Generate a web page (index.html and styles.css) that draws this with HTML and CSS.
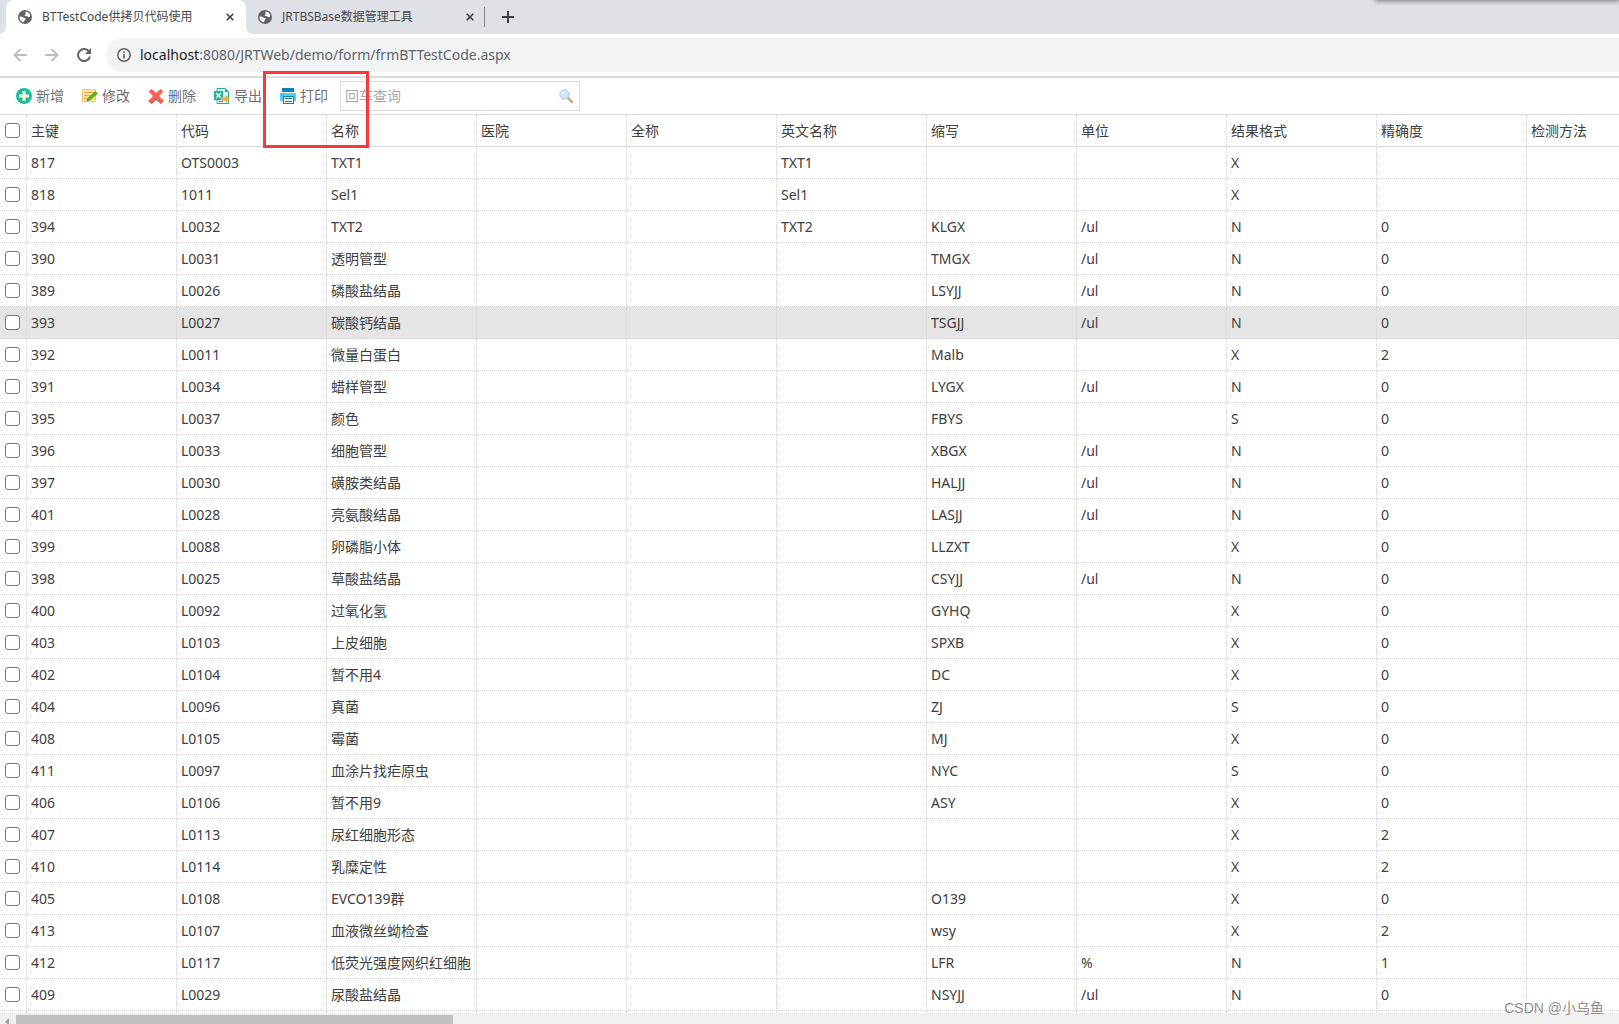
FILE: index.html
```html
<!DOCTYPE html>
<html lang="zh-CN">
<head>
<meta charset="utf-8">
<title>BTTestCode供拷贝代码使用</title>
<link rel="stylesheet" href="styles.css">
</head>
<body>
<svg class="defs" aria-hidden="true">
  <symbol id="globe" viewBox="0 0 14 14"><circle cx="7" cy="7" r="7" fill="#5f6368"/><path d="M7.5 1.6a5.4 5.4 0 0 1 4.8 4.6c-.6 1-1.6 1.2-2.400.9-.4-1-1.500-1-2.600-1.100-.9-.6-.6-1.600.3-1.700C8.200 3.500 7 3 7.500 1.600zM1.600 6.500c1.400-.2 2.700.1 3.600.9.8.6 2.200.3 2.500 1.300.1 1-1.200 1-1.300 2.100l-.6 1.500A5.400 5.400 0 0 1 1.600 6.500z" fill="#fff"/></symbol>
  <symbol id="close" viewBox="0 0 8 8"><path d="M.7.7l6.600 6.600M7.300.7L.7 7.300" stroke="#3c4043" stroke-width="1.600"/></symbol>
</svg>

<header class="browser">
  <nav class="tabs" aria-label="标签页">
    <div class="tab tab-active">
      <svg class="favicon"><use href="#globe"/></svg>
      <span class="tab-title">BTTestCode供拷贝代码使用</span>
      <button class="tab-close" aria-label="关闭"><svg><use href="#close"/></svg></button>
    </div>
    <div class="tab">
      <svg class="favicon"><use href="#globe"/></svg>
      <span class="tab-title">JRTBSBase数据管理工具</span>
      <button class="tab-close" aria-label="关闭"><svg><use href="#close"/></svg></button>
    </div>
    <button class="tab-new" aria-label="新标签页"><svg viewBox="0 0 12 12"><path d="M6 0v12M0 6h12" stroke="#3c4043" stroke-width="2"/></svg></button>
  </nav>
  <div class="address-row">
    <button class="nav-btn" aria-label="后退"><svg viewBox="0 0 14 14"><path d="M14 7H1.500M7.500 1L1.500 7l6 6" fill="none" stroke="#babcbe" stroke-width="1.800"/></svg></button>
    <button class="nav-btn" aria-label="前进"><svg viewBox="0 0 14 14"><path d="M0 7h12.500M6.500 1l6 6-6 6" fill="none" stroke="#babcbe" stroke-width="1.800"/></svg></button>
    <button class="nav-btn" aria-label="刷新"><svg viewBox="0 0 14 14"><path d="M12 3.600A6 6 0 1 0 12.900 8.500" fill="none" stroke="#5f6368" stroke-width="2"/><path d="M14 0v6H8z" fill="#5f6368"/></svg></button>
    <div class="address">
      <svg class="info" viewBox="0 0 14 14"><circle cx="7" cy="7" r="6.200" fill="none" stroke="#5f6368" stroke-width="1.500"/><path d="M7 6v4.500M7 3.500V5" stroke="#5f6368" stroke-width="1.600"/></svg>
      <span class="url"><b>localhost</b>:8080/JRTWeb/demo/form/frmBTTestCode.aspx</span>
    </div>
  </div>
</header>

<main class="page">
  <div class="toolbar">
    <button class="tool"><svg viewBox="0 0 16 16"><circle cx="8" cy="8" r="8" fill="#1abc9c"/><path d="M8 3v10M3 8h10" stroke="#fff6d8" stroke-width="3"/></svg>新增</button>
    <button class="tool"><svg viewBox="0 0 16 16"><path d="M.5 1.500h13v12H.5z" fill="#ffe3a0" stroke="#f5c56c"/><path d="M2 4.500h10M2 7.500h7M2 10.500h4" stroke="#e5a850"/><path d="M13.500 3L16 5.500 8.500 12 5 13l1-3.500z" fill="#57b510"/><path d="M5 13l.5-2 1.500 1.500z" fill="#404040"/></svg>修改</button>
    <button class="tool"><svg viewBox="0 0 16 16"><path d="M3.500 1L8 5l4.500-4L15.500 3.500 11 8l4.500 4.500L13 15.500 8 11l-4.500 4.500L.5 13 5 8 .5 3.500z" fill="#ff5f50"/><path d="M.5 13l3 2.500L8 11l5 4.500 2.500-3" fill="none" stroke="#d64236"/></svg>删除</button>
    <button class="tool"><svg viewBox="0 0 16 16"><path d="M3 .5h8L14.500 4v11.500H3z" fill="#e4f7f2" stroke="#1ab394"/><path d="M11 0v4h4" fill="#1ab394"/><path d="M5 13.500h4" stroke="#1ab394"/><path d="M0 3h9v9H0z" fill="#1ab394"/><path d="M2 5l5 5M7 5l-5 5" stroke="#fff" stroke-width="1.500"/><path d="M7 9.500h4.500V7L16 11l-4.500 4v-2.500H7z" fill="#f5ae35"/></svg>导出</button>
    <button class="tool"><svg viewBox="0 0 16 16"><path d="M2 0h12v4H2z" fill="#0d83b3"/><path d="M0 5h16v8H0z" fill="#55cefa"/><path d="M1 7h1M3 7h1" stroke="#0d83b3"/><path d="M3 8h11v8H3z" fill="#0d83b3"/><path d="M4 9h9v6H4z" fill="#fff"/><path d="M5 10.500h7M5 13.500h7" stroke="#0d83b3"/></svg>打印</button>
    <div class="search">
      <input type="text" placeholder="回车查询" aria-label="回车查询">
      <svg viewBox="0 0 14 14"><path d="M8.500 8.500L13 13" stroke="#e0a66b" stroke-width="2.500" stroke-linecap="round"/><circle cx="5.500" cy="5.500" r="4.700" fill="#cfe7fb" stroke="#a9c9ea"/><path d="M3 5a3 3 0 0 1 3-2" stroke="#fff" fill="none"/></svg>
    </div>
  </div>

  <div class="grid">
    <table>
      <colgroup><col class="col-check"><col span="11" class="col-data"></colgroup>
      <thead>
        <tr><th><input type="checkbox" aria-label="全选"><th>主键<th>代码<th>名称<th>医院<th>全称<th>英文名称<th>缩写<th>单位<th>结果格式<th>精确度<th>检测方法
      </thead>
      <tbody>
        <tr><td><input type="checkbox" aria-label="817"><td>817<td>OTS0003<td>TXT1<td><td><td>TXT1<td><td><td>X<td><td>
        <tr><td><input type="checkbox" aria-label="818"><td>818<td>1011<td>Sel1<td><td><td>Sel1<td><td><td>X<td><td>
        <tr><td><input type="checkbox" aria-label="394"><td>394<td>L0032<td>TXT2<td><td><td>TXT2<td>KLGX<td>/ul<td>N<td>0<td>
        <tr><td><input type="checkbox" aria-label="390"><td>390<td>L0031<td>透明管型<td><td><td><td>TMGX<td>/ul<td>N<td>0<td>
        <tr><td><input type="checkbox" aria-label="389"><td>389<td>L0026<td>磷酸盐结晶<td><td><td><td>LSYJJ<td>/ul<td>N<td>0<td>
        <tr class="hover"><td><input type="checkbox" aria-label="393"><td>393<td>L0027<td>碳酸钙结晶<td><td><td><td>TSGJJ<td>/ul<td>N<td>0<td>
        <tr><td><input type="checkbox" aria-label="392"><td>392<td>L0011<td>微量白蛋白<td><td><td><td>Malb<td><td>X<td>2<td>
        <tr><td><input type="checkbox" aria-label="391"><td>391<td>L0034<td>蜡样管型<td><td><td><td>LYGX<td>/ul<td>N<td>0<td>
        <tr><td><input type="checkbox" aria-label="395"><td>395<td>L0037<td>颜色<td><td><td><td>FBYS<td><td>S<td>0<td>
        <tr><td><input type="checkbox" aria-label="396"><td>396<td>L0033<td>细胞管型<td><td><td><td>XBGX<td>/ul<td>N<td>0<td>
        <tr><td><input type="checkbox" aria-label="397"><td>397<td>L0030<td>磺胺类结晶<td><td><td><td>HALJJ<td>/ul<td>N<td>0<td>
        <tr><td><input type="checkbox" aria-label="401"><td>401<td>L0028<td>亮氨酸结晶<td><td><td><td>LASJJ<td>/ul<td>N<td>0<td>
        <tr><td><input type="checkbox" aria-label="399"><td>399<td>L0088<td>卵磷脂小体<td><td><td><td>LLZXT<td><td>X<td>0<td>
        <tr><td><input type="checkbox" aria-label="398"><td>398<td>L0025<td>草酸盐结晶<td><td><td><td>CSYJJ<td>/ul<td>N<td>0<td>
        <tr><td><input type="checkbox" aria-label="400"><td>400<td>L0092<td>过氧化氢<td><td><td><td>GYHQ<td><td>X<td>0<td>
        <tr><td><input type="checkbox" aria-label="403"><td>403<td>L0103<td>上皮细胞<td><td><td><td>SPXB<td><td>X<td>0<td>
        <tr><td><input type="checkbox" aria-label="402"><td>402<td>L0104<td>暂不用4<td><td><td><td>DC<td><td>X<td>0<td>
        <tr><td><input type="checkbox" aria-label="404"><td>404<td>L0096<td>真菌<td><td><td><td>ZJ<td><td>S<td>0<td>
        <tr><td><input type="checkbox" aria-label="408"><td>408<td>L0105<td>霉菌<td><td><td><td>MJ<td><td>X<td>0<td>
        <tr><td><input type="checkbox" aria-label="411"><td>411<td>L0097<td>血涂片找疟原虫<td><td><td><td>NYC<td><td>S<td>0<td>
        <tr><td><input type="checkbox" aria-label="406"><td>406<td>L0106<td>暂不用9<td><td><td><td>ASY<td><td>X<td>0<td>
        <tr><td><input type="checkbox" aria-label="407"><td>407<td>L0113<td>尿红细胞形态<td><td><td><td><td><td>X<td>2<td>
        <tr><td><input type="checkbox" aria-label="410"><td>410<td>L0114<td>乳糜定性<td><td><td><td><td><td>X<td>2<td>
        <tr><td><input type="checkbox" aria-label="405"><td>405<td>L0108<td>EVCO139群<td><td><td><td>O139<td><td>X<td>0<td>
        <tr><td><input type="checkbox" aria-label="413"><td>413<td>L0107<td>血液微丝蚴检查<td><td><td><td>wsy<td><td>X<td>2<td>
        <tr><td><input type="checkbox" aria-label="412"><td>412<td>L0117<td>低荧光强度网织红细胞<td><td><td><td>LFR<td>%<td>N<td>1<td>
        <tr><td><input type="checkbox" aria-label="409"><td>409<td>L0029<td>尿酸盐结晶<td><td><td><td>NSYJJ<td>/ul<td>N<td>0<td>
        <tr><td><td><td><td><td><td><td><td><td><td><td><td>
      </tbody>
    </table>
  </div>
  <div class="scrollbar"><span class="scroll-arrow"></span><span class="scroll-thumb"></span></div>
</main>

<div class="mark"></div>
<div class="watermark">CSDN @小乌鱼</div>
</body>
</html>
```
FILE: styles.css
```css
* { box-sizing: border-box; }

body {
  margin: 0;
  height: 100vh;
  display: flex;
  flex-direction: column;
  overflow: hidden;
  position: relative;
  background: #fff;
  color: #404040;
  font: 14px/20px "Noto Sans", "Noto Sans CJK SC", sans-serif;
}

.defs { position: absolute; width: 0; height: 0; }
svg { display: block; flex: none; }

button {
  display: flex;
  align-items: center;
  justify-content: center;
  padding: 0;
  border: 0;
  background: none;
  font: inherit;
  color: inherit;
}

/* Browser frame */
.browser { flex: none; border-bottom: 2px solid #dcdcdc; }

.tabs {
  display: flex;
  height: 34px;
  padding-left: 6px;
  background: #dee1e6;
  position: relative;
}
.tabs::after {
  content: "";
  position: absolute;
  top: -4px;
  right: 0;
  left: 85%;
  height: 4px;
  box-shadow: 0 0 5px 1px #707276;
}

.tab {
  display: flex;
  align-items: center;
  width: 240px;
  padding: 0 12px;
  color: #45494d;
  font-size: 12px;
  position: relative;
}
.tab-active { background: #fff; border-radius: 8px 8px 0 0; }
.tab-active::before,
.tab-active::after {
  content: "";
  position: absolute;
  bottom: 0;
  width: 8px;
  height: 8px;
}
.tab-active::before { right: 100%; background: radial-gradient(circle at 0 0, #dee1e6 8px, #fff 8px); }
.tab-active::after { left: 100%; background: radial-gradient(circle at 100% 0, #dee1e6 8px, #fff 8px); }
.favicon { width: 14px; height: 14px; }
.tab-title { flex: 1; padding-left: 10px; white-space: nowrap; }
.tab-close { width: 8px; height: 8px; }
.tab-close svg { width: 8px; height: 8px; }
.tab-new {
  align-self: center;
  width: 46px;
  height: 20px;
  border-left: 1px solid #85888d;
  margin-left: -2px;
}
.tab-new svg { width: 12px; height: 12px; }

.address-row {
  display: flex;
  align-items: center;
  gap: 18px;
  height: 42px;
  padding-left: 13px;
}
.nav-btn { width: 14px; height: 14px; }
.nav-btn svg { width: 14px; height: 14px; }
.address {
  flex: 1;
  display: flex;
  align-items: center;
  gap: 9px;
  height: 34px;
  margin-left: -3px;
  padding-left: 11px;
  border-radius: 17px 0 0 17px;
  background: #f1f3f4;
}
.info { width: 14px; height: 14px; }
.url { color: #5f6368; white-space: nowrap; }
.url b { color: #202124; font-weight: 400; }

/* Page */
.page { flex: 1; min-height: 0; display: flex; flex-direction: column; }

.toolbar {
  flex: none;
  display: flex;
  align-items: center;
  gap: 18px;
  height: 36px;
  padding-left: 16px;
}
.tool { gap: 4px; color: #707070; white-space: nowrap; }
.tool svg { width: 16px; height: 16px; }

.search {
  display: flex;
  align-items: center;
  width: 240px;
  height: 30px;
  margin-left: -6px;
  padding: 0 6px 0 4px;
  border: 1px solid #dcdcdc;
}
.search input {
  flex: 1;
  min-width: 0;
  padding: 0;
  border: 0;
  outline: 0;
  background: none;
  font: inherit;
  color: inherit;
}
.search input::placeholder { color: #a9a9a9; opacity: 1; }
.search svg { width: 14px; height: 14px; }

.grid {
  flex: 1;
  min-height: 0;
  overflow: hidden;
  border-top: 1px solid #dcdcdc;
}
table {
  width: 1677px;
  table-layout: fixed;
  border-collapse: separate;
  border-spacing: 0;
}
.col-check { width: 27px; }
.col-data { width: 150px; }
th, td {
  height: 32px;
  padding: 0 4px;
  border-right: 1px dotted #d6d6d6;
  border-bottom: 1px dotted #d6d6d6;
  font-weight: 400;
  text-align: left;
  white-space: nowrap;
}
th { border-bottom: 1px solid #dcdcdc; }
.hover td { background: #e5e5e5; }

input[type="checkbox"] {
  appearance: none;
  display: block;
  width: 15px;
  height: 15px;
  margin: 0 0 0 1px;
  border: 1px solid #767676;
  border-radius: 3px;
  background: #fff;
}

.scrollbar {
  flex: none;
  display: flex;
  align-items: flex-start;
  height: 11px;
  padding-top: 2px;
  overflow: hidden;
  background: #f0f0f0;
}
.scroll-arrow {
  margin: 3px 7px 0 5px;
  border: 4px solid transparent;
  border-left-width: 0;
  border-right-color: #a3a3a3;
}
.scroll-thumb { width: 27%; height: 9px; background: #c1c1c1; }

/* Overlays */
.mark {
  position: absolute;
  left: 263px;
  top: 71px;
  width: 106px;
  height: 77px;
  border: 3px solid #fb3838;
}
.watermark {
  position: absolute;
  right: 15px;
  bottom: 6px;
  color: #8e8e8e;
  font-family: "Liberation Sans", "Noto Sans CJK SC", sans-serif;
}
```
